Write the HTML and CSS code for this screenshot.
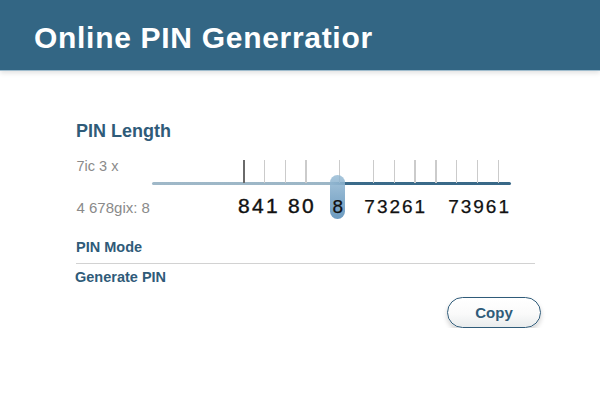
FILE: index.html
```html
<!DOCTYPE html>
<html lang="en">
<head>
<meta charset="utf-8">
<title>Online PIN Generator</title>
<link rel="stylesheet" href="styles.css">
</head>
<body>
<header class="topbar">
  <h1 class="title">Online PIN Generratior</h1>
</header>
<main class="content">
  <h2 class="section-title">PIN Length</h2>
  <div class="slider-grid">
    <div class="hint hint-top">7ic 3 x</div>
    <div class="track-area">
      <div class="ticks">
        <span class="tick tick-dark"></span>
        <span class="tick"></span>
        <span class="tick"></span>
        <span class="tick"></span>
        <span class="tick tick-mid"></span>
        <span class="tick tick-after"></span>
        <span class="tick"></span>
        <span class="tick"></span>
        <span class="tick"></span>
        <span class="tick"></span>
        <span class="tick"></span>
        <span class="tick"></span>
      </div>
      <div class="track"></div>
    </div>
    <div class="hint">4 678gix: 8</div>
    <div class="digits">
      <span class="group group-first">841 80</span>
      <span class="thumb">8</span>
      <span class="group group-second">73261</span>
      <span class="group group-third">73961</span>
    </div>
  </div>
  <h3 class="mode-title">PIN Mode</h3>
  <h3 class="generate-title">Generate PIN</h3>
  <div class="actions">
    <button class="copy-btn" type="button">Copy</button>
  </div>
</main>
</body>
</html>
```

FILE: styles.css
```css
* { box-sizing: border-box; }

html, body {
  margin: 0;
  padding: 0;
  background: #ffffff;
  font-family: "Liberation Sans", Arial, sans-serif;
}

.topbar {
  height: 71px;
  background: #336684;
  padding: 20px 0 0 34px;
  border-bottom: 1px solid #9fbccd;
  box-shadow: 0 2px 5px rgba(0, 0, 0, 0.12);
}

.title {
  margin: 0;
  color: #ffffff;
  font-size: 30px;
  line-height: 36px;
  font-weight: 700;
  letter-spacing: 0.7px;
}

.content {
  padding: 49px 65px 0 75px;
}

.section-title {
  margin: 0 0 0 1px;
  font-size: 18px;
  line-height: 22px;
  font-weight: 700;
  color: #2f5b79;
}

.slider-grid {
  margin-top: 16px;
  display: grid;
  grid-template-columns: 77px 359px;
  align-items: baseline;
  row-gap: 9.5px;
}

.hint {
  font-size: 15px;
  line-height: 17px;
  color: #8a8a8a;
  padding-left: 1.5px;
}

.hint-top {
  align-self: start;
  font-size: 14.5px;
}

.track-area {
  align-self: start;
  padding-top: 2px;
}

.ticks {
  display: flex;
  height: 22.5px;
  padding-left: 91px;
  gap: 19.3px;
}

.tick {
  width: 1.5px;
  height: 100%;
  background: #cbcbcb;
}

.tick-dark { background: #6a6a6a; }
.tick-mid { margin-left: 12.4px; }
.tick-after { margin-left: 13.4px; }

.track {
  height: 3.4px;
  margin-top: -0.6px;
  border-radius: 2px;
  background: linear-gradient(90deg, #9fb8c8 0%, #9cb6c6 50%, #3b6b8a 53.5%, #386887 100%);
}

.digits {
  display: flex;
  align-items: baseline;
  padding-left: 86px;
  line-height: 22px;
  color: #111111;
  -webkit-text-stroke: 0.25px #111111;
}

.group {
  font-size: 19px;
  letter-spacing: 2px;
  white-space: pre;
}

.group-first {
  font-size: 21px;
  letter-spacing: 2.3px;
  -webkit-text-stroke: 0.4px #111111;
}

.thumb {
  position: relative;
  z-index: 0;
  width: 17px;
  margin-left: 14px;
  text-align: center;
  font-size: 19px;
}

.thumb::before {
  content: "";
  position: absolute;
  z-index: -1;
  left: 0;
  right: 0;
  top: -21px;
  bottom: -1px;
  border-radius: 9px;
  background: linear-gradient(180deg, rgba(140, 180, 208, 0.75) 0%, #8fb4d0 40%, #6c9bc0 100%);
}

.group-second { margin-left: 19px; }
.group-third { margin-left: 21px; }

.mode-title {
  margin: 21px 0 0 1px;
  padding-bottom: 7.5px;
  border-bottom: 1px solid #d2d2d2;
  font-size: 14.5px;
  line-height: 17px;
  font-weight: 700;
  color: #2f5b79;
}

.generate-title {
  margin: 4.5px 0 0 0;
  font-size: 14.5px;
  line-height: 17px;
  font-weight: 700;
  color: #2f5b79;
}

.actions {
  display: flex;
  justify-content: flex-end;
  margin: 11px -6px 0 0;
}

.copy-btn {
  width: 94px;
  height: 31px;
  border: 1.5px solid #2f5b79;
  border-radius: 16px;
  background: linear-gradient(180deg, #ffffff 0%, #fafafa 55%, #e9eced 100%);
  box-shadow: 0 3px 5px rgba(0, 0, 0, 0.18);
  font-family: "Liberation Sans", Arial, sans-serif;
  font-size: 15px;
  font-weight: 700;
  color: #2f5b79;
  padding: 0;
}
```
